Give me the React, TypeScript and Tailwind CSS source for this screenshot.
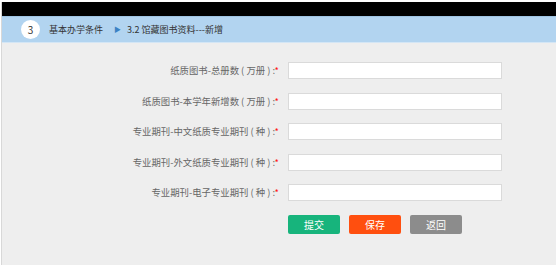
const FIELDS = [
  '纸质图书-总册数 ( 万册 ) :',
  '纸质图书-本学年新增数 ( 万册 ) :',
  '专业期刊-中文纸质专业期刊 ( 种 ) :',
  '专业期刊-外文纸质专业期刊 ( 种 ) :',
  '专业期刊-电子专业期刊 ( 种 ) :',
];

export default function App() {
  return (
    <div
      className="w-[558px] h-[265px] bg-white pl-[1px] pr-[2px] pt-[2px] overflow-hidden"
      style={{ fontFamily: '"Noto Sans CJK SC", "Liberation Sans", sans-serif' }}
    >
      <div className="h-full flex flex-col border-l border-[#d8d8d8] bg-[#eeeeee]">
        {/* Top bar */}
        <div className="h-[14px] bg-black" />

        {/* Breadcrumb */}
        <div className="h-[27px] bg-[#b2d4f0] border-t border-[#9fc4e2] border-b border-b-[#d4e6f5] flex items-center">
          <div className="ml-[19px] w-[19px] h-[19px] rounded-full bg-white flex items-center justify-center text-[10px] text-[#333]">
            3
          </div>
          <span className="ml-[9px] text-[9px] text-[#333]">基本办学条件</span>
          <span className="ml-[11px] text-[7px] text-[#3b82c4]">▶</span>
          <span className="ml-[6px] text-[9px] text-[#333]">3.2 馆藏图书资料---新增</span>
        </div>

        {/* Form */}
        <div className="flex flex-col pt-[19px] gap-[13.5px]">
          {FIELDS.map(label => (
            <div key={label} className="flex items-center">
              <div className="w-[277px] text-right text-[9.4px] text-[#666] whitespace-nowrap">
                {label}
                <span className="text-[#ff1a1a]">*</span>
              </div>
              <input
                type="text"
                className="ml-[9px] w-[214px] h-[17px] bg-white border border-[#dadada] outline-none"
              />
            </div>
          ))}

          <div className="flex gap-[9px] ml-[286px]">
            <button className="w-[52px] h-[19px] rounded-[2px] bg-[#17b47c] text-white text-[10px]">提交</button>
            <button className="w-[52px] h-[19px] rounded-[2px] bg-[#ff4f0f] text-white text-[10px]">保存</button>
            <button className="w-[52px] h-[19px] rounded-[2px] bg-[#8c8c8c] text-white text-[10px]">返回</button>
          </div>
        </div>
      </div>
    </div>
  );
}
